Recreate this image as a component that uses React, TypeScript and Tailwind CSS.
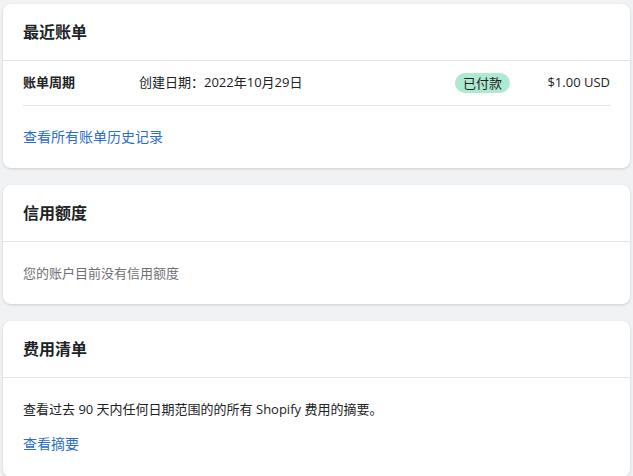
export default function App() {
  const font = { fontFamily: '"Open Sans", "Noto Sans CJK SC", sans-serif' };
  return (
    <div className="min-h-[476px] bg-[#f1f2f3] px-[3px] pt-[4px] pb-[4px] flex flex-col gap-[17px] text-[14px] text-[#202223]" style={font}>
      <section className="rounded-lg bg-white shadow-[0_1px_3px_rgba(0,0,0,0.15)]">
        <h2 className="px-5 py-4 text-[16px] font-semibold leading-6 border-b border-[#e1e3e5]">最近账单</h2>
        <div className="px-5">
          <div className="flex items-center h-[45px] border-b border-[#e1e3e5]">
            <span className="w-[116px] font-semibold text-[13px]">账单周期</span>
            <span className="flex-1 text-[13px]">创建日期：2022年10月29日</span>
            <span className="rounded-full bg-[#aee9d1] px-2 leading-5 text-[13px]">已付款</span>
            <span className="w-[100px] text-right text-[13px]">$1.00 USD</span>
          </div>
          <div className="py-5 leading-[22px]">
            <a className="text-[#2c6ecb]">查看所有账单历史记录</a>
          </div>
        </div>
      </section>
      <section className="rounded-lg bg-white shadow-[0_1px_3px_rgba(0,0,0,0.15)]">
        <h2 className="px-5 py-4 text-[16px] font-semibold leading-6 border-b border-[#e1e3e5]">信用额度</h2>
        <p className="px-5 py-5 leading-[22px] text-[#6d7175] text-[13px]">您的账户目前没有信用额度</p>
      </section>
      <section className="rounded-lg bg-white shadow-[0_1px_3px_rgba(0,0,0,0.15)]">
        <h2 className="px-5 py-4 text-[16px] font-semibold leading-6 border-b border-[#e1e3e5]">费用清单</h2>
        <div className="px-5 pt-5 pb-[22px] leading-[22px]">
          <p className="text-[13px]">查看过去 90 天内任何日期范围的的所有 Shopify 费用的摘要。</p>
          <a className="mt-[13px] block text-[#2c6ecb]">查看摘要</a>
        </div>
      </section>
    </div>
  );
}
